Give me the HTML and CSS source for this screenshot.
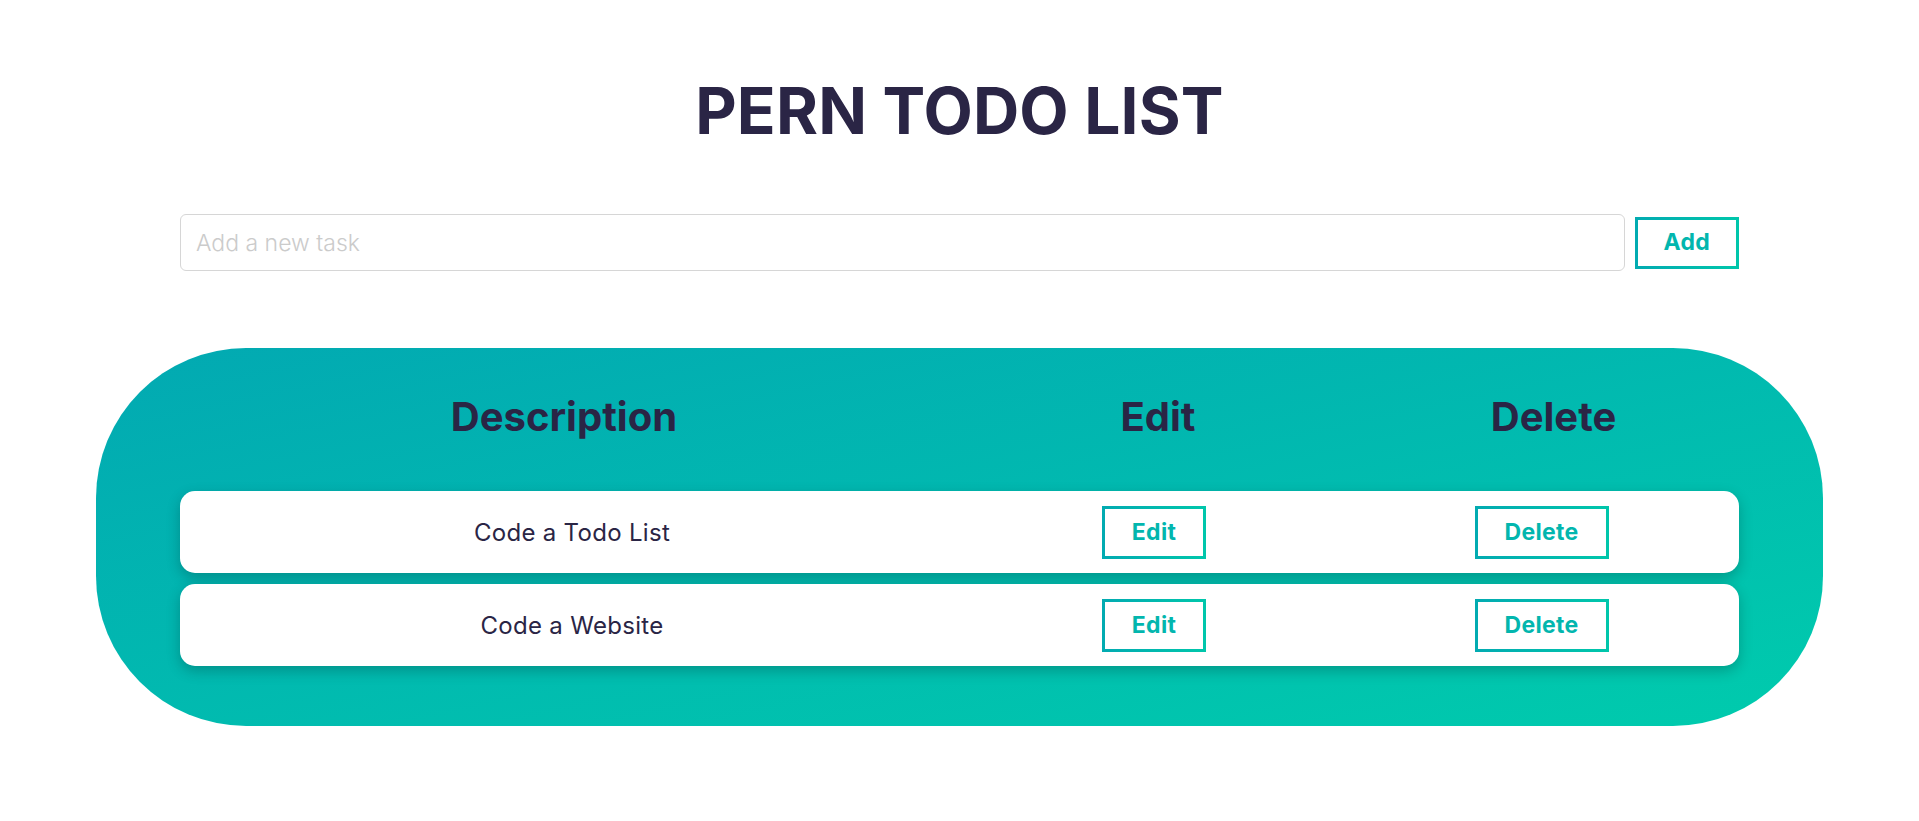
FILE: index.html
```html
<!DOCTYPE html>
<html lang="en">
<head>
<meta charset="utf-8">
<title>PERN Todo List</title>
<link rel="stylesheet" href="styles.css">
</head>
<body>
<main class="app">
  <h1 class="title">PERN TODO LIST</h1>
  <div class="wrap">
    <form class="add-form">
      <input class="add-input" type="text" placeholder="Add a new task">
      <button class="btn btn-add" type="button">Add</button>
    </form>
  </div>
  <section class="board">
    <div class="board-head">
      <div class="head-cell">Description</div>
      <div class="head-cell">Edit</div>
      <div class="head-cell">Delete</div>
    </div>
    <div class="todo-list">
      <div class="todo-row">
        <div class="todo-desc">Code a Todo List</div>
        <div class="todo-cell"><button class="btn" type="button">Edit</button></div>
        <div class="todo-cell"><button class="btn" type="button">Delete</button></div>
      </div>
      <div class="todo-row">
        <div class="todo-desc">Code a Website</div>
        <div class="todo-cell"><button class="btn" type="button">Edit</button></div>
        <div class="todo-cell"><button class="btn" type="button">Delete</button></div>
      </div>
    </div>
  </section>
</main>
</body>
</html>
```
FILE: styles.css
```css
* { box-sizing: border-box; }

html, body {
  margin: 0;
  padding: 0;
  background: #ffffff;
}

body {
  font-family: Inter, "Noto Sans", "DejaVu Sans", sans-serif;
  color: #2a2545;
}

.app {
  display: flex;
  flex-direction: column;
  align-items: center;
}

.title {
  margin: 72px 0 0;
  font-size: 64px;
  font-weight: 700;
  line-height: normal;
  color: #2a2545;
  letter-spacing: 0.2px;
}

.wrap {
  width: 90%;
  padding: 0 84px;
  margin-top: 65px;
}

.add-form {
  display: flex;
  align-items: center;
  gap: 10px;
  margin: 0;
}

.add-input {
  flex: 1;
  height: 57px;
  border: 1px solid #d6d6d6;
  border-radius: 6px;
  padding: 0 15px;
  font-family: inherit;
  font-size: 23px;
  font-weight: 300;
  color: #2a2545;
  outline: none;
  background: #fff;
}

.add-input::placeholder {
  color: #cbcbcb;
}

.btn {
  font-family: inherit;
  font-size: 23px;
  font-weight: 700;
  line-height: 29px;
  letter-spacing: 0.3px;
  padding: 9px 27px;
  background: #fff;
  color: #02b6ae;
  border: 3px solid #02b6ae;
  border-image: linear-gradient(to right, #02abb1, #00c6ab) 1;
  cursor: pointer;
}

.btn-add {
  height: 52px;
  padding: 0 26px;
}

.board {
  width: 90%;
  margin-top: 77px;
  padding: 45px 84px 60px;
  border-radius: 150px;
  background: linear-gradient(to bottom right, #02a9b2, #00cbad);
}

.board-head {
  display: grid;
  grid-template-columns: 768fr 420fr 371fr;
}

.head-cell {
  text-align: center;
  font-size: 40px;
  font-weight: 700;
  line-height: 48px;
  color: #2a2545;
}

.todo-list {
  margin-top: 50px;
  display: flex;
  flex-direction: column;
  gap: 11px;
}

.todo-row {
  display: grid;
  grid-template-columns: 784fr 380fr 395fr;
  align-items: center;
  height: 82px;
  background: #fff;
  border-radius: 15px;
  box-shadow: 0 5px 14px rgba(0, 0, 0, 0.22);
}

.todo-desc {
  text-align: center;
  font-size: 24px;
  font-weight: 400;
  letter-spacing: 0.3px;
  color: #2a2545;
}

.todo-cell {
  display: flex;
  justify-content: center;
}
```
